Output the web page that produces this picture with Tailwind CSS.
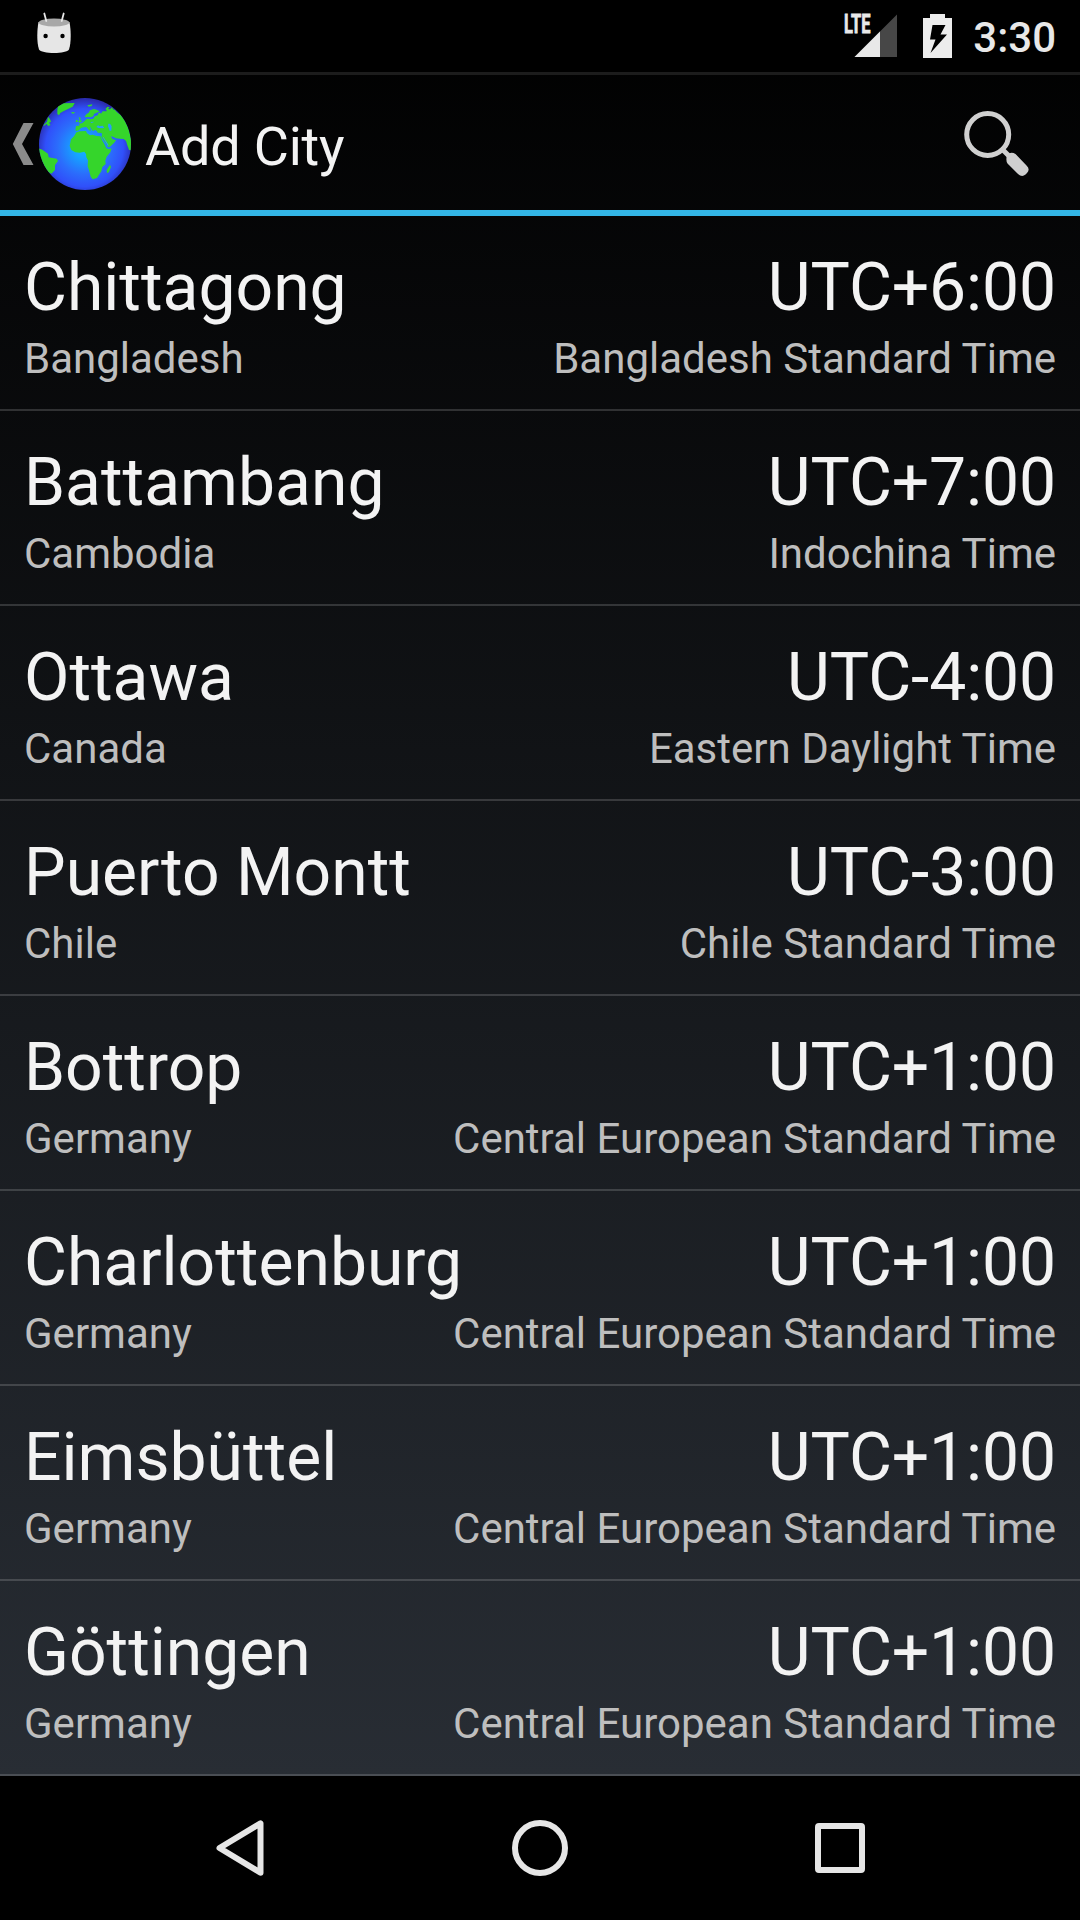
<!DOCTYPE html>
<html lang="en">
<head>
<meta charset="utf-8">
<title>Add City</title>
<script src="https://cdn.jsdelivr.net/npm/@tailwindcss/browser@4"></script>
</head>
<body class="bg-black">
<div class="w-[1080px] h-[1920px] flex flex-col overflow-hidden bg-black font-[Roboto,sans-serif] text-[#f3f3f3]">
  <div class="h-[1776px] flex flex-col bg-linear-to-b/srgb from-black to-[#282d34]">
    <!-- Status bar -->
    <div class="h-[72px] shrink-0 bg-black flex items-start justify-between pl-9 pr-6">
      <svg class="w-9 h-[60px]" viewBox="0 0 36 60">
        <path d="M2.500 22C1 30 .6 42 3 49.500C4 51.800 11 53 18 53S32 51.800 33 49.500C35.400 42 35 30 33.500 22Z" fill="#e6e6e6"/>
        <ellipse cx="18" cy="22.500" rx="15.300" ry="4" fill="#a8a8a8"/>
        <path d="M8.300 13.500L10.300 21M27.700 13.500L25.700 21" stroke="#e6e6e6" stroke-width="1.800" stroke-linecap="round"/>
        <circle cx="9.600" cy="36" r="2.200" fill="#000"/><circle cx="26.500" cy="36" r="2.200" fill="#000"/>
      </svg>
      <div class="flex items-start">
        <svg class="w-[54px] h-[60px] mr-[25px]" viewBox="0 0 54 60">
          <path d="M53 14.500V57H10.500Z" fill="#474747"/>
          <path d="M36 31.500V57H10.500Z" fill="#e8e8e8"/>
          <text x="0" y="33.300" font-family="Roboto" font-weight="700" font-size="25" textLength="26.500" lengthAdjust="spacingAndGlyphs" fill="#e8e8e8" stroke="#e8e8e8" stroke-width=".8">LTE</text>
        </svg>
        <svg class="w-[29px] h-[60px] mr-[21px]" viewBox="0 0 29 60">
          <path d="M0 18H7V14H22V18H29V58H0Z" fill="#ececec"/>
          <path d="M9.500 25H22.500L17.500 34.500H24L7.500 53L12.500 39.500H7Z" fill="#000"/>
        </svg>
        <span class="text-[42px] leading-[49px] mt-[13px] font-medium text-[#e8e8e8]">3:30</span>
      </div>
    </div>
    <!-- Action bar -->
    <header class="h-36 shrink-0 border-t-3 border-t-[#1c1c1c] border-b-6 border-b-[#33b5e5] flex items-center pl-3 pr-[50px]">
      <svg class="w-[22px] h-[42px] mt-0.5" viewBox="0 0 22 42"><path d="M11.500 0H21.500L10 21L21.500 42H11.500L.8 21Z" fill="#8b8b8b"/></svg>
      <svg class="w-[110px] h-[110px] -ml-1 mt-[5px] shrink-0" viewBox="0 0 330 330">
        <defs>
          <radialGradient id="sea" gradientUnits="userSpaceOnUse" cx="163" cy="173" r="146">
            <stop offset="0" stop-color="#12b8ff"/><stop offset=".22" stop-color="#16a2ff"/><stop offset=".55" stop-color="#2b6dfc"/><stop offset=".8" stop-color="#3050fa"/><stop offset="1" stop-color="#2a2cae"/>
          </radialGradient>
          <clipPath id="disc"><circle cx="165" cy="162" r="138"/></clipPath>
        </defs>
        <circle cx="165" cy="162" r="138" fill="url(#sea)"/>
        <g clip-path="url(#disc)" fill="#35d52b">
          <path d="M82 60L84 47L97 40L134 39L128 50L108 60L100 64L91 69L87 76L82 72Z"/>
          <path d="M40 106L51 95L54 80L60 87L63 95L57 98L62 105L54 108L50 101L43 107Z"/>
          <path d="M172 46L187 43L185 48L176 50ZM123 67L132 66L135 69L127 71Z"/>
          <path d="M25 175L37 179L54 191L56 202L80 206L84 213L75 225L75 240L64 251L48 242L25 205Z"/>
          <path d="M146 82L152 83L151 90L157 94L148 98L144 94L149 91ZM138 90L143 89L143 95L137 97Z"/>
          <path d="M164 80L169 73L176 68L180 61L192 57L202 60L209 65L200 68L192 72L190 79L181 82L175 81L167 82Z"/>
          <path d="M136 119L138 108L148 107L148 101L157 99L166 91L171 86L181 88L190 86L194 79L204 75L205 69L210 68L213 71L218 64L230 64L229 59L226 57L233 50L239 52L234 57L240 58L246 52L249 58L255 60L261 67L272 75L284 91L295 115L303 145L304 181L297 180L292 166L288 153L281 147L269 146L258 145L249 140L243 139L247 147L258 151L252 159L240 170L234 172L229 161L220 150L214 141L216 135L215 129L203 128L201 124L196 120L188 123L182 114L179 107L182 124L176 119L169 111L161 112L153 114L147 121L138 123Z"/>
          <path d="M139 127L149 124L168 123L171 130L180 136L188 134L199 138L212 139L216 150L223 162L229 175L237 178L245 175L241 187L230 200L226 212L227 222L217 231L214 244L207 254L201 264L188 268L182 260L178 244L173 229L174 211L169 202L168 192L163 185L149 188L136 187L124 180L119 168L123 148L132 139Z"/>
          <path d="M240 224L243 231L237 246L231 250L230 240L235 232Z"/>
        </g>
        <g fill="#269cff"><path d="M199 111L204 106L209 109L218 107L223 113L218 115L206 114ZM235 101L240 101L245 109L244 122L239 122L234 109ZM181 96L193 95L185 99Z"/>
        <path d="M218 141L221 142L236 166L233 167Z"/></g>
      </svg>
      <h1 class="text-[54px] leading-[63px] tracking-[-0.2px] ml-[5px] mt-[7px] grow">Add City</h1>
      <svg class="w-[66px] h-[66px] mt-[3px]" viewBox="0 0 66 66">
        <circle cx="23.700" cy="23.500" r="21" fill="none" stroke="#d0d0d0" stroke-width="5"/>
        <path d="M37.500 37.500L46 46" stroke="#cfcfcf" stroke-width="5"/>
        <path d="M43 44L45 42.500Q48 41 51.500 43L62.500 54.500Q66.500 58 63 62L61.500 63.500Q58 66.500 54 63L43.500 52.500Q41.500 49.500 43 44Z" fill="#cfcfcf"/>
      </svg>
    </header>
    <ul id="cities" class="flex flex-col"></ul>
  </div>
  <!-- Navigation bar -->
  <nav class="h-36 flex items-center pl-[216px] pr-[215px] justify-between">
    <svg class="w-[48px] h-[56px]" viewBox="0 0 48 56"><path d="M3.500 28L44.500 3.300V52.700Z" fill="none" stroke="#e6e6e6" stroke-width="6" stroke-linejoin="round"/></svg>
    <svg class="w-[56px] h-[56px]" viewBox="0 0 56 56"><circle cx="28" cy="28" r="25" fill="none" stroke="#e6e6e6" stroke-width="6"/></svg>
    <svg class="w-[50px] h-[50px]" viewBox="0 0 50 50"><path d="M4 0H46Q50 0 50 4V46Q50 50 46 50H4Q0 50 0 46V4Q0 0 4 0ZM6 6V44H44V6Z" fill="#e6e6e6" fill-rule="evenodd"/></svg>
  </nav>
</div>
<script>
const cities = [
  ["Chittagong", "UTC+6:00", "Bangladesh", "Bangladesh Standard Time"],
  ["Battambang", "UTC+7:00", "Cambodia", "Indochina Time"],
  ["Ottawa", "UTC-4:00", "Canada", "Eastern Daylight Time"],
  ["Puerto Montt", "UTC-3:00", "Chile", "Chile Standard Time"],
  ["Bottrop", "UTC+1:00", "Germany", "Central European Standard Time"],
  ["Charlottenburg", "UTC+1:00", "Germany", "Central European Standard Time"],
  ["Eimsbüttel", "UTC+1:00", "Germany", "Central European Standard Time"],
  ["Göttingen", "UTC+1:00", "Germany", "Central European Standard Time"]
];
document.getElementById("cities").innerHTML = cities.map(([city, offset, country, zone]) => `
  <li class="h-[195px] shrink-0 border-b-2 border-white/16 px-6 pt-[33px]">
    <div class="flex justify-between text-[66px] leading-[77px]"><span>${city}</span><span class="tracking-[-0.1px]">${offset}</span></div>
    <div class="flex justify-between mt-2 text-[42px] leading-[49px] text-[#bebebe]"><span>${country}</span><span>${zone}</span></div>
  </li>`).join("");
</script>
</body>
</html>
